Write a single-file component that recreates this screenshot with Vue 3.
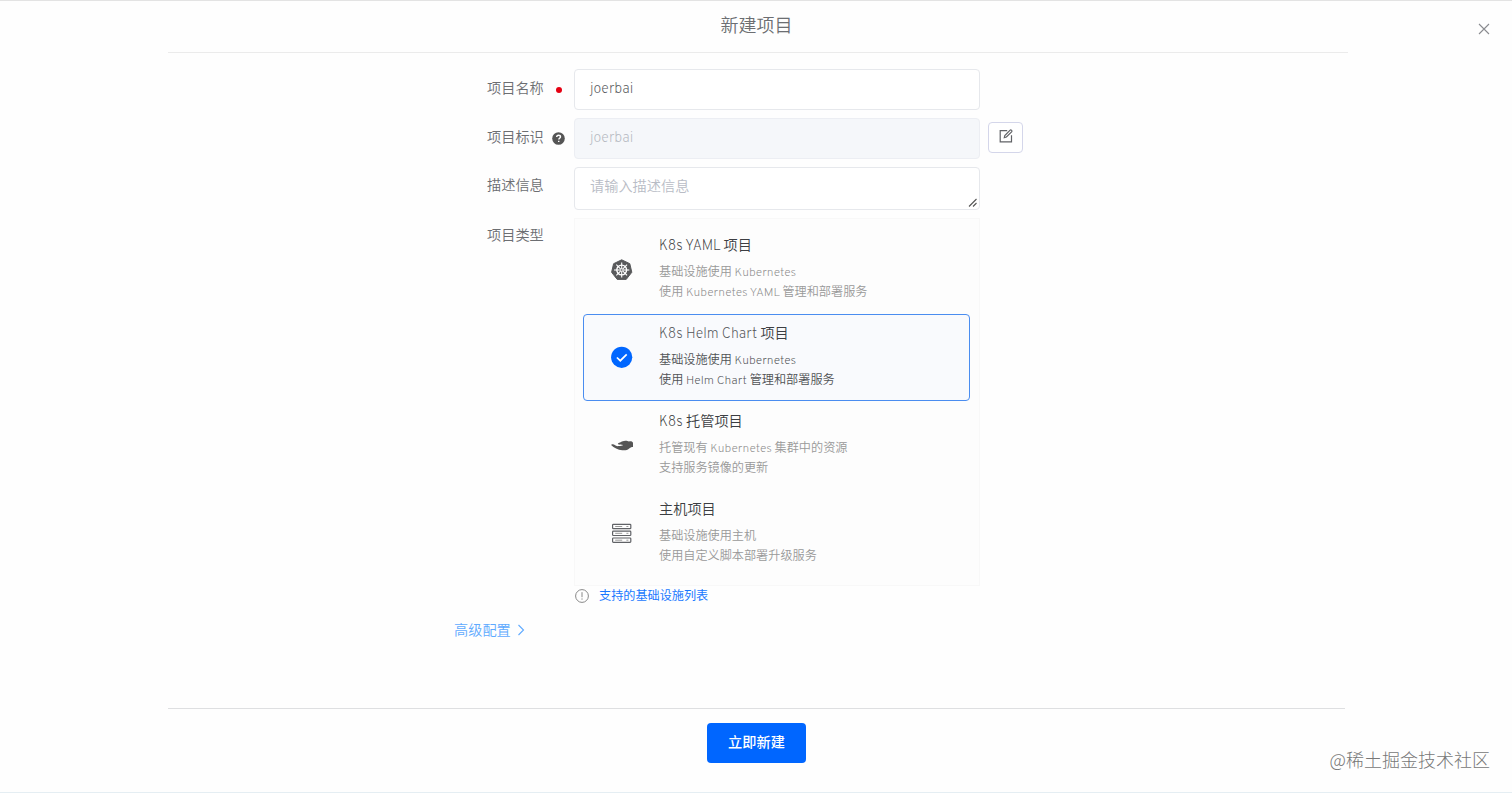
<script setup>
import { ref } from 'vue'

const selected = ref('helm')
const types = [
  { id: 'yaml', title: 'K8s YAML 项目', lines: ['基础设施使用 Kubernetes', '使用 Kubernetes YAML 管理和部署服务'] },
  { id: 'helm', title: 'K8s Helm Chart 项目', lines: ['基础设施使用 Kubernetes', '使用 Helm Chart 管理和部署服务'] },
  { id: 'hosted', title: 'K8s 托管项目', lines: ['托管现有 Kubernetes 集群中的资源', '支持服务镜像的更新'] },
  { id: 'host', title: '主机项目', lines: ['基础设施使用主机', '使用自定义脚本部署升级服务'] }
]
const spokes = [0, 45, 90, 135, 180, 225, 270, 315]

// Splits mixed text so that Latin runs can take a thinner weight.
const runs = (text) => text.split(/([\x20-\x7e]+)/).filter(Boolean).map((s) => ({ s, latin: /^[\x20-\x7e]/.test(s) }))
</script>

<template>
  <main class="dialog">
    <header class="head">
      <h1>新建项目</h1>
      <svg class="close" viewBox="0 0 12 12" width="12" height="12"><path d="M1 1l10 10M11 1L1 11" /></svg>
    </header>

    <section class="form">
      <div class="row">
        <div class="label">项目名称<i class="dot"></i></div>
        <div class="input"><span class="latin">joerbai</span></div>
      </div>
      <div class="row">
        <div class="label">项目标识
          <svg class="help" viewBox="0 0 13 13" width="13" height="13">
            <circle cx="6.5" cy="6.5" r="6.3" fill="#555" />
            <path d="M4.7 5.1c0-1.2.8-1.8 1.9-1.8s1.9.7 1.9 1.6c0 1.1-1.7 1.3-1.7 2.5M6.7 8.7v1.3" fill="none" stroke="#fff" stroke-width="1.4" />
          </svg>
        </div>
        <div class="input disabled"><span class="latin">joerbai</span></div>
        <button class="edit">
          <svg viewBox="0 0 14 14" width="14" height="14">
            <path d="M8.2 1.6H1.2v11.2h11.3V6.2M12.4 1.1c.8.7.7 1.2.2 1.8L7.4 8l-2.1.7.5-2.2 5.1-5.2c.5-.5 1-.6 1.5-.2z" />
          </svg>
        </button>
      </div>
      <div class="row area-row">
        <div class="label">描述信息</div>
        <div class="input area">请输入描述信息
          <svg class="grip" viewBox="0 0 10 10" width="10" height="10"><path d="M1 8.5L8.5 1M5 8.5L8.5 5" /></svg>
        </div>
      </div>
      <div class="row type-row">
        <div class="label">项目类型</div>
        <div class="types">
          <div v-for="t in types" :key="t.id" class="type" :class="{ active: t.id === selected }" @click="selected = t.id">
            <div class="icon">
              <svg v-if="t.id === selected" viewBox="0 0 22 22" width="22" height="22">
                <circle cx="10.7" cy="11.3" r="10.6" fill="#0066ff" />
                <path d="M5.9 11.5l3.4 3.2 6.4-6.3" fill="none" stroke="#fff" stroke-width="1.7" />
              </svg>
              <svg v-else-if="t.id === 'yaml'" class="low" viewBox="0 0 22 22" width="22" height="22">
                <path d="M10.7 .8l8.1 3.9 2 8.6-5.6 7.1h-9L.6 13.3l2-8.6z" fill="#58595b" stroke="#58595b" stroke-linejoin="round" />
                <g fill="none" stroke="#fff" transform="translate(-.3 0)">
                  <circle cx="11" cy="11" r="4.9" stroke-width="1.4" />
                  <path v-for="a in spokes" :key="a" d="M11 10V3.4" stroke-width="1.1" :transform="`rotate(${a} 11 11)`" />
                  <circle cx="11" cy="11" r="1.2" fill="#58595b" stroke-width=".7" />
                </g>
              </svg>
              <svg v-else-if="t.id === 'hosted'" class="low" viewBox="0 0 22 22" width="22" height="22">
                <path d="M.1 9.9c.6-1 2.3-.6 4.9.9 1.2.6 2 .5 2.8.3 1.7-.4 3.4-.4 4.4-1.2-1.7-.2-4.2.1-5.1-.6-.8-.7.5-1.5 2-1.9 2.1-1.2 4.3-2.1 6.5-1.6l2.4.6c1.5-.5 3-.3 4 1.3v4.4c-1.6 0-2.8.6-4.1 1.7-1.6 1.4-4 1.8-6.7 1.4C7 14.7 2.9 12.9.1 9.9z" fill="#555" />
              </svg>
              <svg v-else viewBox="0 0 22 22" width="22" height="22">
                <g fill="#fff" stroke="#606266" stroke-width="1.2">
                  <rect x="1.6" y="2.3" width="18.2" height="4.4" rx=".8" />
                  <rect x="1.6" y="9.1" width="18.2" height="4.4" rx=".8" />
                  <rect x="1.6" y="16" width="18.2" height="4.4" rx=".8" />
                </g>
                <path d="M4.2 4.5h7M4.2 11.3h7M4.2 18.2h7M15.4 4.5h2M15.4 11.3h2M15.4 18.2h2" stroke="#999" />
              </svg>
            </div>
            <div class="info">
              <h2><span v-for="r in runs(t.title)" :key="r.s" :class="{ latin: r.latin }">{{ r.s }}</span></h2>
              <p v-for="l in t.lines" :key="l"><span v-for="r in runs(l)" :key="r.s" :class="{ latin: r.latin }">{{ r.s }}</span></p>
            </div>
          </div>
        </div>
      </div>
      <div class="tip">
        <svg viewBox="0 0 14 14" width="14" height="14"><circle cx="7" cy="7" r="6.4" /><path d="M7 3.2v5M7 9.4v1.3" /></svg>
        <a>支持的基础设施列表</a>
      </div>
      <div class="advanced">高级配置
        <svg viewBox="0 0 8 12" width="8" height="12"><path d="M1.5 1L6.5 6l-5 5" /></svg>
      </div>
    </section>

    <footer class="foot"><button class="create">立即新建</button></footer>
    <div class="watermark">@稀土掘金技术社区</div>
  </main>
</template>

<style>
body { background: #fefefe; }
</style>

<style scoped>
* { box-sizing: border-box; }
.dialog { position: relative; height: 793px; overflow: hidden; border-top: 1px solid #e3e3e3; border-bottom: 1px solid #e5eef3; background: #fefefe; font-family: Overpass, Roboto, "Noto Sans CJK SC", sans-serif; font-weight: 350; font-size: 14.2px; color: #6c6e72; }
.latin { font-weight: 200; }
.head { width: 1180px; height: 52px; margin-left: 168px; border-bottom: 1px solid #ebebeb; }
h1 { margin: 0; padding: 3px 3px 0 0; font-size: 18px; line-height: 48px; font-weight: 350; text-align: center; }
.close { position: absolute; right: 22px; top: 22px; fill: none; stroke: #8a8c90; stroke-width: 1.1; }
.form { height: 655px; padding-top: 16px; }
.row { display: flex; align-items: flex-start; margin-bottom: 8px; }
.label { position: relative; width: 574px; padding-left: 487px; line-height: 40px; height: 37px; white-space: nowrap; }
.dot { position: absolute; left: 556px; top: 18px; width: 6px; height: 6px; border-radius: 50%; background: #e50012; }
.help { position: absolute; left: 552px; top: 14px; }
.input { position: relative; width: 406px; height: 41px; padding-left: 15px; line-height: 39px; border: 1px solid #e6e8ec; border-radius: 4px; background: #fff; color: #55575b; }
.disabled { background: #f5f7fa; border-color: #eceef3; color: #b4b8c0; }
.edit { width: 35px; height: 31px; margin: 4px 0 0 8px; padding: 0 0 4px; display: grid; place-items: center; border: 1px solid #d4d6ea; border-radius: 4px; background: #fff; }
.edit svg { fill: none; stroke: #606266; stroke-width: 1.2; }
.area { height: 43px; color: #b8bcc5; }
.grip { position: absolute; right: 1px; bottom: 1px; fill: none; stroke: #555; stroke-width: 1.1; }
.area-row .label { line-height: 38px; }
.type-row { margin-bottom: 0; }
.type-row .label { line-height: 37px; }
.types { width: 406px; height: 368px; padding: 7px 8px; border: 1px solid #f8f8f8; background: #fdfdfd; }
.type { display: flex; width: 387px; height: 87px; margin-bottom: 1px; border: 1px solid transparent; border-radius: 4px; }
.active { border-color: #4a8df0; background: #f9fafd; }
.icon { width: 75px; padding: 31px 0 0 27px; }
.icon .low { margin-top: 1px; }
.info { padding-top: 8px; }
h2 { margin: 0 0 6px; font-size: 14.2px; line-height: 22px; font-weight: 350; color: #3c3e42; white-space: pre; }
p { margin: 0; font-size: 12.15px; line-height: 20.4px; color: #999; white-space: pre; }
p .latin { color: #8a8a8a; }
.active p, .active .latin { color: #505255; }
.tip { display: flex; align-items: center; height: 20px; padding-left: 575px; font-size: 12.15px; font-weight: 400; color: #1978ff; }
.tip a { margin-top: -1px; }
.tip svg { margin-right: 10px; fill: none; stroke: #888; stroke-width: 1; }
.advanced { padding-left: 454px; margin-top: 14px; line-height: 22px; color: #5faaff; }
.advanced svg { margin-left: 3px; vertical-align: -1px; fill: none; stroke: #5faaff; stroke-width: 1.1; }
.foot { width: 1177px; margin-left: 168px; padding-top: 14px; border-top: 1px solid #dedfe1; text-align: center; }
.create { display: block; width: 99px; height: 40px; margin: 0 auto; padding: 0 0 4px; border: 0; border-radius: 4px; background: #0066ff; color: #fff; font: 500 14.2px "Noto Sans CJK SC", sans-serif; }
.watermark { position: absolute; right: 22px; bottom: 20px; font: 300 18px/26px "Noto Sans CJK SC", sans-serif; color: #777; }
</style>
